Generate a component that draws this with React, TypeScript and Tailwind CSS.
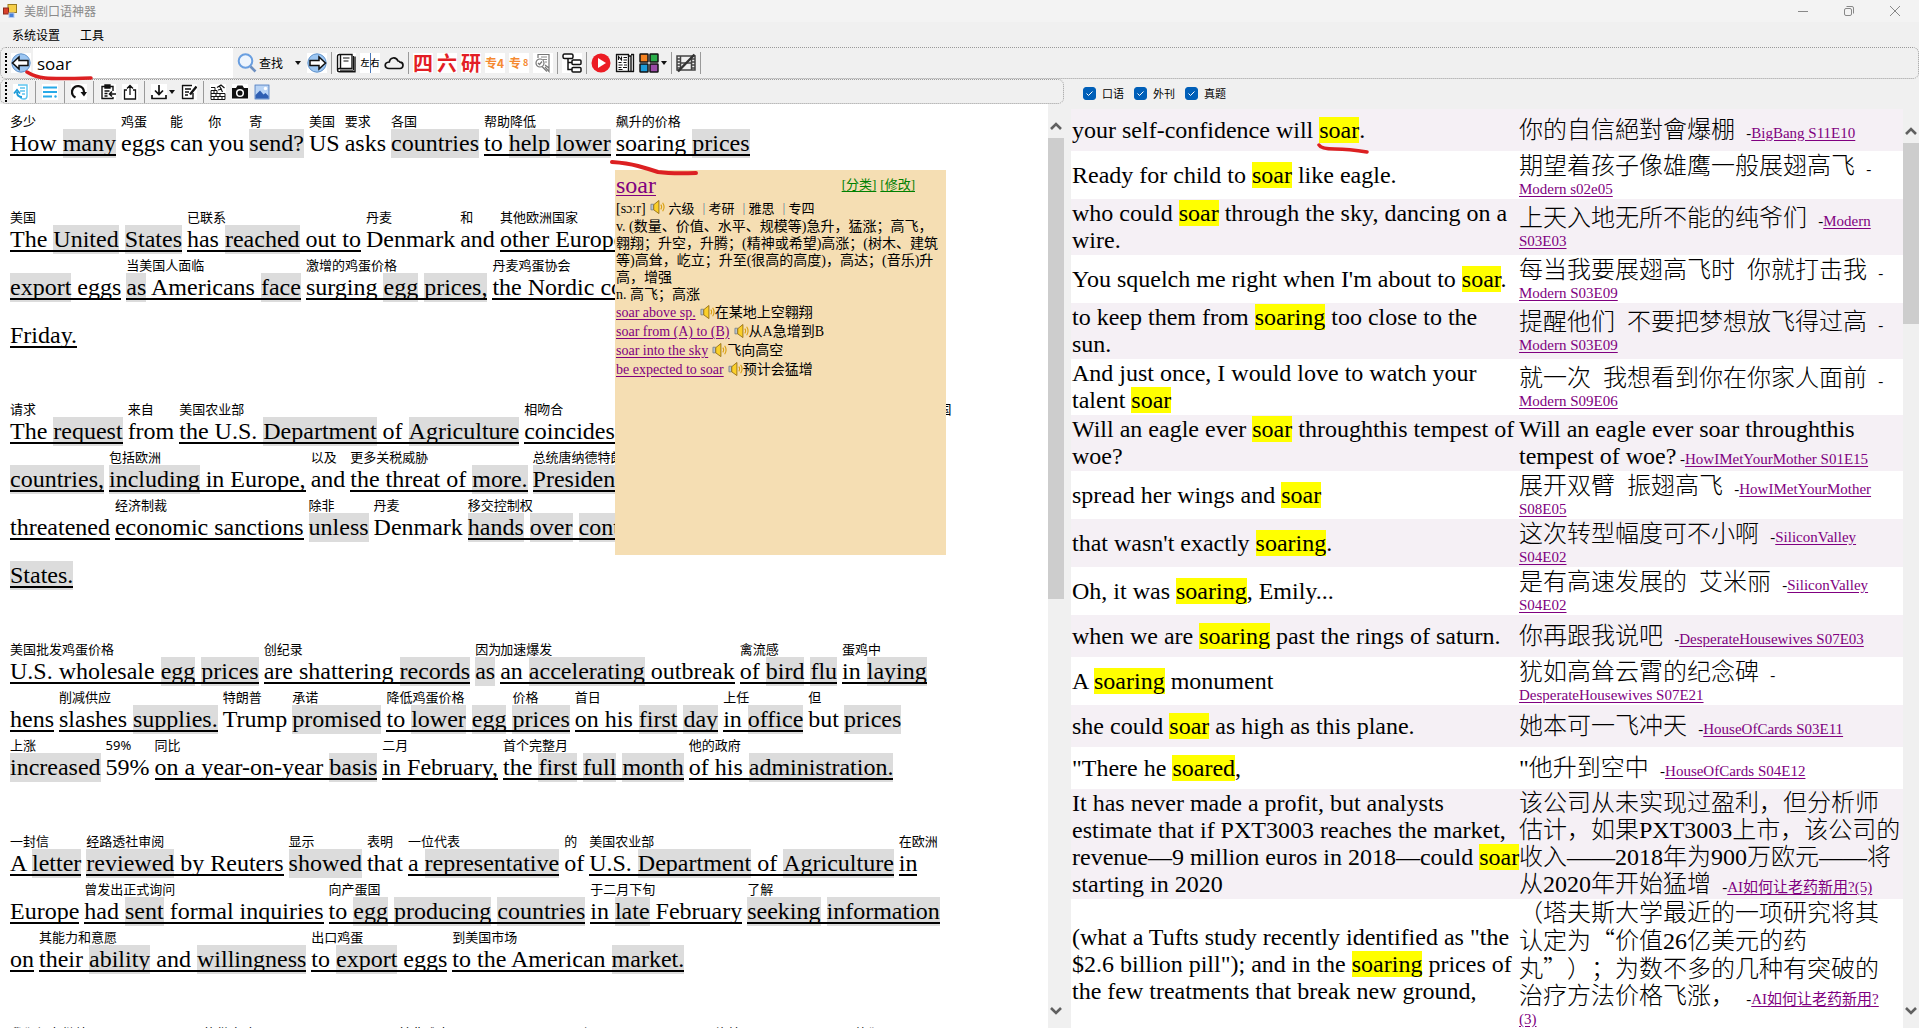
import { useState } from "react";
import type { ReactNode } from "react";

// 一个短语：t 中 *word* 表示灰底生词，r 是上方译文，u 为下划线
type Phrase = { t: string; r?: string; u?: boolean; join?: boolean };

const article: Phrase[][][] = [
  [
    [
      { t: "How *many*", r: "多少", u: true },
      { t: "eggs", r: "鸡蛋" },
      { t: "can", r: "能" },
      { t: "you", r: "你" },
      { t: "*send?*", r: "寄" },
      { t: "US", r: "美国" },
      { t: "asks", r: "要求" },
      { t: "*countries*", r: "各国" },
      { t: "to *help* *lower*", r: "帮助降低", u: true },
      { t: "soaring *prices*", r: "飙升的价格", u: true },
    ],
  ],
  [
    [
      { t: "The *United* *States*", r: "美国", u: true },
      { t: "has *reached* out to", r: "已联系", u: true },
      { t: "Denmark", r: "丹麦" },
      { t: "and", r: "和" },
      { t: "other European nations to", r: "其他欧洲国家", u: true },
    ],
    [
      { t: "*export* eggs", u: true },
      { t: "*as* Americans *face*", r: "当美国人面临", u: true },
      { t: "surging *egg* *prices,*", r: "激增的鸡蛋价格", u: true },
      { t: "the Nordic country's egg group said", r: "丹麦鸡蛋协会", u: true },
    ],
    [{ t: "Friday.", u: true }],
  ],
  [
    [
      { t: "The *request*", r: "请求", u: true },
      { t: "from", r: "来自" },
      { t: "the U.S. *Department* of *Agriculture*", r: "美国农业部", u: true },
      { t: "coincides with *tariffs* imposed on *various*", r: "相吻合", u: true },
      { t: "", r: "多国" },
    ],
    [
      { t: "*countries,*", u: true },
      { t: "*including* in Europe,", r: "包括欧洲", u: true },
      { t: "and", r: "以及" },
      { t: "the threat of *more.*", r: "更多关税威胁", u: true },
      { t: "*President* Donald Trump", r: "总统唐纳德特朗普", u: true },
    ],
    [
      { t: "threatened", u: true },
      { t: "economic sanctions", r: "经济制裁", u: true },
      { t: "*unless*", r: "除非" },
      { t: "Denmark", r: "丹麦" },
      { t: "*hands* *over* *control* to the United", r: "移交控制权", u: true },
    ],
    [{ t: "*States.*", u: true }],
  ],
  [
    [
      { t: "U.S. wholesale *egg* *prices*", r: "美国批发鸡蛋价格", u: true },
      { t: "are shattering *records*", r: "创纪录", u: true },
      { t: "*as*", r: "因为" },
      { t: "an *accelerating* outbreak", r: "加速爆发", u: true },
      { t: "of *bird* *flu*", r: "禽流感", u: true },
      { t: "in *laying*", r: "蛋鸡中", u: true },
    ],
    [
      { t: "hens", u: true },
      { t: "slashes *supplies.*", r: "削减供应", u: true },
      { t: "Trump", r: "特朗普" },
      { t: "*promised*", r: "承诺" },
      { t: "to *lower* *egg*", r: "降低鸡蛋价格", u: true, join: true },
      { t: "*prices*", r: "价格", u: true },
      { t: "on his *first* *day*", r: "首日", u: true },
      { t: "in *office*", r: "上任", u: true },
      { t: "but", r: "但" },
      { t: "*prices*" },
    ],
    [
      { t: "*increased*", r: "上涨" },
      { t: "59%", r: "59%" },
      { t: "on a year-on-year *basis*", r: "同比", u: true },
      { t: "in February,", r: "二月", u: true },
      { t: "the *first* *full* *month*", r: "首个完整月", u: true },
      { t: "of his *administration.*", r: "他的政府", u: true },
    ],
  ],
  [
    [
      { t: "A *letter*", r: "一封信", u: true },
      { t: "*reviewed* by Reuters", r: "经路透社审阅", u: true },
      { t: "*showed*", r: "显示" },
      { t: "that", r: "表明" },
      { t: "a *representative*", r: "一位代表", u: true },
      { t: "of", r: "的" },
      { t: "U.S. *Department* of *Agriculture*", r: "美国农业部", u: true },
      { t: "in", r: "在欧洲", u: true },
    ],
    [
      { t: "Europe", u: true },
      { t: "had *sent* formal inquiries", r: "曾发出正式询问", u: true },
      { t: "to *egg* *producing* *countries*", r: "向产蛋国", u: true },
      { t: "in *late* February", r: "于二月下旬", u: true },
      { t: "*seeking* *information*", r: "了解", u: true },
    ],
    [
      { t: "on", u: true },
      { t: "their *ability* and *willingness*", r: "其能力和意愿", u: true },
      { t: "to *export* eggs", r: "出口鸡蛋", u: true },
      { t: "to the American *market.*", r: "到美国市场", u: true },
    ],
  ],
  [
    [
      { t: "We are still *seeking*", r: "我们仍在继续", u: true },
      { t: "to learn whose *eggs*", r: "的供应鸡蛋", u: true },
      { t: "could *be* made or", r: "并非难事", u: true },
      { t: "*available* and", r: "以便可用", u: true },
      { t: "*shipped* over to", r: "运往美国", u: true },
      { t: "them", r: "他们" },
    ],
  ],
];

type Example = { en: string; zh: string; src: string; h: string };

const examples: Example[] = [
  { en: "your self-confidence will *soar*.", zh: "你的自信絕對會爆棚", src: "BigBang S11E10", h: "h-[42px]" },
  { en: "Ready for child to *soar* like eagle.", zh: "期望着孩子像雄鹰一般展翅高飞", src: "Modern s02e05", h: "h-12" },
  { en: "who could *soar* through the sky, dancing on a\nwire.", zh: "上天入地无所不能的纯爷们", src: "Modern S03E03", h: "h-14" },
  { en: "You squelch me right when I'm about to *soar*.", zh: "每当我要展翅高飞时  你就打击我", src: "Modern S03E09", h: "h-12" },
  { en: "to keep them from *soaring* too close to the\nsun.", zh: "提醒他们  不要把梦想放飞得过高", src: "Modern S03E09", h: "h-14" },
  { en: "And just once, I would love to watch your\ntalent *soar*", zh: "就一次  我想看到你在你家人面前", src: "Modern S09E06", h: "h-14" },
  { en: "Will an eagle ever *soar* throughthis tempest of\nwoe?", zh: "Will an eagle ever soar throughthis\ntempest of woe?", src: "HowIMetYourMother S01E15", h: "h-14" },
  { en: "spread her wings and *soar*", zh: "展开双臂  振翅高飞", src: "HowIMetYourMother S08E05", h: "h-12" },
  { en: "that wasn't exactly *soaring*.", zh: "这次转型幅度可不小啊", src: "SiliconValley S04E02", h: "h-12" },
  { en: "Oh, it was *soaring*, Emily...", zh: "是有高速发展的  艾米丽", src: "SiliconValley S04E02", h: "h-12" },
  { en: "when we are *soaring* past the rings of saturn.", zh: "你再跟我说吧", src: "DesperateHousewives S07E03", h: "h-[42px]" },
  { en: "A *soaring* monument", zh: "犹如高耸云霄的纪念碑", src: "DesperateHousewives S07E21", h: "h-12" },
  { en: "she could *soar* as high as this plane.", zh: "她本可一飞冲天", src: "HouseOfCards S03E11", h: "h-[42px]" },
  { en: '"There he *soared*,', zh: '"他升到空中', src: "HouseOfCards S04E12", h: "h-[42px]" },
  {
    en: "It has never made a profit, but analysts\nestimate that if PXT3003 reaches the market,\nrevenue—9 million euros in 2018—could *soar*\nstarting in 2020",
    zh: "该公司从未实现过盈利，但分析师\n估计，如果PXT3003上市，该公司的\n收入——2018年为900万欧元——将\n从2020年开始猛增",
    src: "AI如何让老药新用?(5)",
    h: "h-[109px]",
  },
  {
    en: '(what a Tufts study recently identified as "the\n$2.6 billion pill"); and in the *soaring* prices of\nthe few treatments that break new ground,',
    zh: "（塔夫斯大学最近的一项研究将其\n认定为“价值26亿美元的药\n丸”）；为数不多的几种有突破的\n治疗方法价格飞涨，",
    src: "AI如何让老药新用?\n(3)",
    h: "h-32",
  },
];

// 把 *word* 拆出来交给 render 包装
function mark(text: string, render: (w: string, i: number) => ReactNode) {
  return text.split(/\*([^*]+)\*/).map((part, i) => (i % 2 ? render(part, i) : part));
}

// 中文引号用中文字体，占满一个字宽
function quotes(text: string) {
  return text.split(/([“”])/).map((part, i) =>
    i % 2 ? <span key={i} className="font-['Noto_Sans_CJK_SC',sans-serif] leading-none">{part}</span> : part
  );
}

function Line({ phrases }: { phrases: Phrase[] }) {
  return (
    <div className="flex h-12 items-end whitespace-nowrap">
      {phrases.map((p, i) => (
        <span key={i} className={`flex flex-col ${p.join ? "" : "mr-[5px]"}`}>
          <span className="h-4 w-0 font-['Noto_Sans','Noto_Sans_CJK_SC',sans-serif] text-[13px] leading-4">{p.r}</span>
          <span className="h-[29px] leading-[29px]">
            <span className={`inline-block h-[27px] ${p.u ? "border-b-2 border-black" : ""} ${p.join ? "whitespace-pre" : ""}`}>
              {mark(p.t, (w, k) => (
                <span key={k} className="inline-block h-[29px] bg-[#dcdcdc]">
                  <span className={`inline-block h-[27px] ${p.u ? "border-b-2 border-black" : ""}`}>{w}</span>
                </span>
              ))}
              {p.join ? " " : ""}
            </span>
          </span>
        </span>
      ))}
    </div>
  );
}

function Speaker() {
  return (
    <svg viewBox="0 0 16 16" className="inline-block size-[15px] align-[-1px]">
      <path d="M1 4.500h3v6H1z" fill="#b9c4d0" stroke="#6b7785" strokeWidth="0.8" />
      <path d="M4 5l5.500-4.500v14L4 10.500z" fill="#fbd02a" stroke="#8f6a10" strokeWidth="0.9" />
      <path d="M11.500 5q1.800 2.500 0 5M13.500 3q3 4.500 0 9" fill="none" stroke="#d9a010" strokeWidth="1.2" />
    </svg>
  );
}

const meaning = [
  "v. (数量、价值、水平、规模等)急升，猛涨；高飞，",
  "翱翔；升空，升腾；(精神或希望)高涨；(树木、建筑",
  "等)高耸，屹立；升至(很高的高度)，高达；(音乐)升",
  "高，增强",
  "n. 高飞；高涨",
];

const usages = [
  ["soar above sp.", "在某地上空翱翔"],
  ["soar from (A) to (B)", "从A急增到B"],
  ["soar into the sky", "飞向高空"],
  ["be expected to soar", "预计会猛增"],
];

function WordPopup() {
  return (
    <section className="absolute left-[615px] top-[66px] h-[385px] w-[331px] bg-[#f5deb3] px-px text-sm leading-[17px] whitespace-nowrap">
      <svg viewBox="0 0 90 18" className="absolute left-[-5px] top-[-11px] h-[18px] w-[90px]">
        <path d="M2 3q15 1 26 4t20 6q14 2 38 1" fill="none" stroke="#dc2022" strokeWidth="4" strokeLinecap="round" />
      </svg>
      <div className="flex h-[29px] items-center justify-between pr-[30px]">
        <a href="#soar" className="text-2xl text-[#800080] underline decoration-1 underline-offset-2">soar</a>
        <span className="flex gap-1 text-[13px] text-[#008000]">
          <a href="#class" className="underline underline-offset-2">[分类]</a>
          <a href="#edit" className="underline underline-offset-2">[修改]</a>
        </span>
      </div>
      <div className="flex h-[19px] items-center">
        <span>[sɔːr]</span>
        <a href="#play" aria-label="发音" className="ml-1"><Speaker /></a>
        <span className="ml-1 flex text-[13px]">
          {["六级", "考研", "雅思", "专四"].map((t, i) => (
            <span key={t} className="flex items-center">
              {i > 0 && <span className="ml-2 mr-1 h-3 w-0.5 border-l border-[#e8b090] bg-[#9cc8c0]" />}
              {t}
            </span>
          ))}
        </span>
      </div>
      {meaning.map((m) => (
        <div key={m}>{m}</div>
      ))}
      {usages.map(([en, zh]) => (
        <div key={en} className="flex h-[19px] items-center">
          <a href="#usage" className="mr-1 text-[#800080] underline underline-offset-2">{en}</a>
          <Speaker />
          <span>{zh}</span>
        </div>
      ))}
    </section>
  );
}

function ScrollBar({ thumb }: { thumb: string }) {
  return (
    <div className="flex w-4 shrink-0 flex-col items-center bg-[#f0f0f0] pt-[18px]">
      <svg viewBox="0 0 12 8" className="mb-2 h-2 w-3 shrink-0">
        <path d="M1 7l5-5 5 5" fill="none" stroke="#606060" strokeWidth="2.6" />
      </svg>
      <div className="flex w-full flex-1 flex-col">
        <div className={`w-full bg-[#cdcdcd] ${thumb}`} />
      </div>
      <svg viewBox="0 0 12 8" className="mb-[13px] h-2 w-3 shrink-0">
        <path d="M1 1l5 5 5-5" fill="none" stroke="#606060" strokeWidth="2.6" />
      </svg>
    </div>
  );
}

function Icon({ label, box = "0 0 20 20", size = "size-5", white = true, children }: { label: string; box?: string; size?: string; white?: boolean; children: ReactNode }) {
  return (
    <button type="button" aria-label={label} className={`shrink-0 ${white ? "bg-white" : ""}`}>
      <svg viewBox={box} className={size} fill="none" stroke="#111" strokeWidth="1.5">
        {children}
      </svg>
    </button>
  );
}

function Sep() {
  return <span className="h-[22px] w-px shrink-0 bg-[#9a9a9a]" />;
}

function Caret() {
  return (
    <svg viewBox="0 0 6 4" className="h-1 w-1.5 shrink-0">
      <path d="M0 0h6L3 4z" fill="#111" />
    </svg>
  );
}

function Grip() {
  return <span className="h-5 w-0 shrink-0 border-l-2 border-dotted border-black" />;
}

function MainToolbar({ word, onWord }: { word: string; onWord: (w: string) => void }) {
  return (
    <div className="relative flex h-8 items-center gap-1 rounded-md border border-dotted border-[#9a9a9a] pl-1">
      <Grip />
      <Icon label="后退">
        <circle cx="10" cy="10" r="9.2" fill="#9cc6f2" stroke="#5c8fc8" strokeWidth="1" />
        <path d="M1.500 10L8 4v3.500h9v5H8V16z" fill="#fff" stroke="#111" />
      </Icon>
      <input
        aria-label="单词"
        value={word}
        onChange={(e) => onWord(e.target.value)}
        className="-ml-0.5 h-[30px] w-[200px] bg-white px-1 font-['Open_Sans',sans-serif] text-[17px] text-black outline-none"
      />
      <button type="button" className="flex items-center gap-0.5 font-['Noto_Sans_CJK_SC',sans-serif] text-xs">
        <svg viewBox="0 0 20 20" className="size-5" fill="none">
          <circle cx="8.500" cy="8" r="6.800" stroke="#6a9fe0" strokeWidth="2" fill="#eef5fd" />
          <path d="M13.500 13.500l5 5" stroke="#6d8fc0" strokeWidth="2.600" />
        </svg>
        查找
      </button>
      <span className="ml-2 mr-0.5 flex"><Caret /></span>
      <Icon label="前进">
        <circle cx="10" cy="10" r="9.2" fill="#9cc6f2" stroke="#5c8fc8" strokeWidth="1" />
        <path d="M18.500 10L12 4v3.500H3v5h9V16z" fill="#fff" stroke="#111" />
      </Icon>
      <Sep />
      <Icon label="词典">
        <path d="M3.500 15.500h12.500V1.500H3.500Q1.500 1.500 1.500 3.500V17Q1.500 18.800 3.500 18.800H19V3.500M3.500 15.500Q1.500 15.500 1.500 17M4.500 1.500v14" strokeWidth="1.400" />
        <path d="M7 5h6.500M7.500 8h5M4 17.200h13.500V3" strokeWidth="1" />
      </Icon>
      <button type="button" className="flex w-5 shrink-0 justify-center bg-white text-[9px] leading-5 font-medium">
        <span>左</span>
        <span className="w-px bg-[#4a78b8]" />
        <span>右</span>
      </button>
      <Icon label="云" white={false}>
        <path d="M5 15.500h10.500a3.200 3.200 0 0 0 .5-6.400Q15.500 8 14 8Q12.500 4.500 9 5Q5.800 5.500 5.300 9Q1.200 9.300 1.200 12.500Q1.500 15.500 5 15.500z" strokeWidth="1.700" />
      </Icon>
      <Sep />
      {["四", "六", "研"].map((t) => (
        <button key={t} type="button" className="w-5 shrink-0 bg-white text-xl leading-5 font-bold text-[#e31e25]">{t}</button>
      ))}
      <button type="button" className="flex w-5 shrink-0 items-center bg-white text-xs leading-5 font-bold text-[#f58a32]">专<span>4</span></button>
      <button type="button" className="flex w-5 shrink-0 items-center bg-white text-xs leading-5 font-bold text-[#f58a32]">专<span className="ml-0.5 text-[9px]">8</span></button>
      <Icon label="真题">
        <path d="M5 5V1.500h11V15l-4-3M16 15v3.500L12 14" stroke="#777" strokeWidth="1.200" />
        <path d="M8 4h6M10 6.500h4M12 9h2" stroke="#888" strokeWidth="1" />
        <circle cx="7" cy="10" r="4" stroke="#777" strokeWidth="1.200" />
        <path d="M5 10l1.500 1.500L9 8.500M9 13.500l5 5" stroke="#777" strokeWidth="1.200" />
      </Icon>
      <Sep />
      <Icon label="词根">
        <rect x="1" y="1" width="10" height="4.500" rx="1.500" />
        <rect x="10" y="7" width="9" height="4.500" rx="1" />
        <rect x="10" y="14.500" width="9" height="4.500" rx="1" />
        <path d="M6 5.500V16.500h4M6 9.500h4" />
      </Icon>
      <Sep />
      <Icon label="播放" white={false}>
        <circle cx="10" cy="10" r="9.500" fill="#ec1c24" stroke="none" />
        <path d="M7 5l8 5-8 5z" fill="#fff" stroke="none" />
      </Icon>
      <Icon label="外刊">
        <path d="M1.500 1.500h12v17h-12zM13.500 3h2.500v15.500h-2.500M16 1.500h2.500v17H16" strokeWidth="1.400" />
        <path d="M3.500 7V3.500l3 3.500V3.500M8.500 4.500h3.500M8.500 7h3.500M3.500 9.500h3M8.500 9.500h3M3.500 12h4M9 12h3M3.500 14.500h3M8 14.500h4M3.500 16.500h4" strokeWidth="1.100" />
      </Icon>
      <Icon label="颜色">
        <rect x="1" y="1" width="8" height="8" rx="0.500" fill="#f58220" />
        <rect x="11" y="1" width="8" height="8" rx="0.500" fill="#2bae4a" />
        <rect x="1" y="11" width="8" height="8" rx="0.500" fill="#1c9ad6" />
        <rect x="11" y="11" width="8" height="8" rx="0.500" fill="#9a4ba6" />
      </Icon>
      <span className="-ml-0.5 flex"><Caret /></span>
      <Sep />
      <Icon label="视频" white={false}>
        <path d="M1 3h18v14H1zM4.500 3v14M15.500 3v14M4.500 10h11" stroke="#444" />
        <path d="M1 6h3M1 9h3M1 12h3M1 15h3M16 6h3M16 9h3M16 12h3M16 15h3" stroke="#444" />
        <path d="M2 18.500L18.500 1.500" stroke="#333" strokeWidth="2.500" />
      </Icon>
      <Sep />
      <svg viewBox="0 0 68 12" className="absolute left-6 top-[22px] h-3 w-[68px]">
        <path d="M2 2q8 5 18 6t46 0" fill="none" stroke="#dc2022" strokeWidth="3.500" strokeLinecap="round" />
      </svg>
    </div>
  );
}

function SubToolbar() {
  return (
    <div className="flex h-[25px] items-center gap-1.5 rounded-md border border-dotted border-[#9a9a9a] pl-1">
      <Grip />
      <Icon label="返回" box="0 0 16 16" size="size-4">
        <path d="M5 1h9v11q0 3-3 3-4 0-4-3M7 4h5M7 7h5M9 10h3" stroke="#5cc4ee" strokeWidth="1.400" />
        <path d="M9 13Q4 13 4 8M1 9.500L4 6l3 3.500" stroke="#1b9ad8" strokeWidth="1.800" />
      </Icon>
      <Sep />
      <Icon label="段落" box="0 0 16 16" size="size-4">
        <path d="M1 3.500h14M1 8h14M1 12.500h9" stroke="#27a9e8" strokeWidth="1.800" />
        <circle cx="13.500" cy="12.500" r="1.200" fill="#27a9e8" stroke="none" />
      </Icon>
      <Sep />
      <Icon label="刷新" box="0 0 16 16" size="size-4">
        <path d="M4.500 13.500A6 6 0 1 1 13 8" strokeWidth="2.300" />
        <path d="M9.500 8h6.500l-3 4.500z" fill="#111" stroke="none" />
      </Icon>
      <Sep />
      <Icon label="粘贴" box="0 0 16 16" size="size-4">
        <path d="M13 7V2.500H2v12h11V13M5 2.500V1h5v3H5zM4.500 7h5M4.500 9.500h3M4.500 12h3" strokeWidth="1.400" />
        <path d="M16 10H9.500M12 7.500L9.500 10l2.500 2.500" strokeWidth="1.600" />
      </Icon>
      <Icon label="分享" box="0 0 16 16" size="size-4">
        <path d="M5 6H2.500v9h11V6H11M8 11V1.500M5 4.500l3-3 3 3" strokeWidth="1.300" />
      </Icon>
      <Sep />
      <Icon label="下载" box="0 0 16 16" size="size-4">
        <path d="M8 1v9M4 6.500l4 4 4-4M1 11v3.500h14V11" strokeWidth="1.700" />
      </Icon>
      <span className="-ml-1 flex"><Caret /></span>
      <Icon label="编辑" box="0 0 16 16" size="size-4">
        <path d="M12 9v5.500H1.500v-13H11M4 5h6M4 8h4M4 11h3" strokeWidth="1.400" />
        <path d="M15.500 2.500L9 10.500" strokeWidth="2.400" />
      </Icon>
      <Sep />
      <Icon label="积累" box="0 0 16 16" size="size-4">
        <path d="M1 6.500h6v3h8v6H1zM1 9.500h6M1 12.500h14M4 6.500v3M6 9.500v3M4 12.500v3M10 9.500v3M8 12.500v3M12 12.500v3M1 3.500h4v3" strokeWidth="1" />
        <path d="M7 3.500l4-2.500 3.500 3M9.500 2l3 6M8 6l4-1" strokeWidth="1.200" />
      </Icon>
      <Icon label="截图" box="0 0 16 16" size="size-4">
        <path d="M0 4h4l1.500-2.500h5L12 4h4v10.500H0z" fill="#111" stroke="none" />
        <circle cx="8" cy="9" r="3.300" fill="#111" stroke="#fff" strokeWidth="1.500" />
      </Icon>
      <Icon label="图片" box="0 0 16 16" size="size-4">
        <rect x="1" y="1" width="14" height="14" fill="#b9d4f6" stroke="#5c84c0" strokeWidth="1" />
        <path d="M1.500 14.500V11L6 6.500l3.500 4 2-1.500 3 3v2.500z" fill="#2f5fb3" stroke="none" />
        <circle cx="11.500" cy="4.500" r="1.700" fill="#fff" stroke="none" />
      </Icon>
    </div>
  );
}

function Check({ label }: { label: string }) {
  return (
    <label className="flex items-center gap-1.5 text-[11px]">
      <span className="relative flex">
        <input type="checkbox" defaultChecked className="peer size-[13px] appearance-none rounded-[3px] border border-[#005fb8] checked:bg-[#005fb8]" />
        <svg viewBox="0 0 13 13" className="pointer-events-none absolute inset-0 hidden size-[13px] peer-checked:block">
          <path d="M3.500 6.500l2 2 4-4" fill="none" stroke="#fff" strokeWidth="1" />
        </svg>
      </span>
      {label}
    </label>
  );
}

function ExampleTable() {
  return (
    <table className="w-full table-fixed border-collapse text-black">
      <colgroup>
        <col className="w-[447px]" />
        <col />
      </colgroup>
      <tbody>
        {examples.map((ex, i) => (
          <tr key={i} className={`${ex.h} ${i % 2 ? "bg-white" : "bg-[#f5f0f5]"}`}>
            <td className="p-px align-middle text-2xl leading-[27px] whitespace-pre">
              {mark(ex.en, (w, k) => (
                <mark key={k} className="relative bg-[#ffff00] text-black">
                  {w}
                  {i === 0 && (
                    <svg viewBox="0 0 54 12" className="absolute left-[-2px] top-[26px] h-3 w-[54px]">
                      <path d="M2 2q2 4 16 4t32 3" fill="none" stroke="#dc2022" strokeWidth="3.500" strokeLinecap="round" />
                    </svg>
                  )}
                </mark>
              ))}
            </td>
            <td className="p-px align-middle text-[15px] leading-[18px]">
              <span className="text-2xl leading-[27px] font-light whitespace-pre-wrap">{quotes(ex.zh)}</span>
              {i === 6 ? " -" : <>&nbsp; &nbsp;-</>}
              <wbr />
              <a href="#source" className="whitespace-pre-line text-[#800080] underline underline-offset-2">{ex.src}</a>
            </td>
          </tr>
        ))}
      </tbody>
    </table>
  );
}

export default function App() {
  const [word, setWord] = useState("soar");

  return (
    <div className="flex h-screen flex-col overflow-hidden bg-[#f0f0f0] font-['Noto_Sans_CJK_SC',sans-serif] text-black [text-spacing-trim:space-all]">
      <header className="flex h-[22px] shrink-0 items-center bg-[#f3f3f3] pl-[3px] text-xs text-[#8a8a8a]">
        <svg viewBox="0 0 14 14" className="mr-[7px] size-3.5">
          <rect x="5" y="0.500" width="8.500" height="8" fill="#f6cf4a" stroke="#9a7a20" />
          <rect x="0.500" y="4" width="5" height="6" fill="#d8402c" stroke="#8c2a1c" />
          <rect x="6" y="9" width="5" height="4.500" fill="#4a80d8" stroke="#b9cdf0" />
        </svg>
        <h1 className="flex-1">美剧口语神器</h1>
        <div className="flex items-center gap-9 pr-[19px]">
          <button type="button" aria-label="最小化">
            <svg viewBox="0 0 10 10" className="size-2.5"><path d="M0 5.500h10" stroke="#888" /></svg>
          </button>
          <button type="button" aria-label="还原">
            <svg viewBox="0 0 10 10" className="size-2.5" fill="none" stroke="#888">
              <rect x="0.500" y="2.500" width="7" height="7" rx="1.500" />
              <path d="M2.500 .5H8Q9.500 .5 9.500 2v5.500" />
            </svg>
          </button>
          <button type="button" aria-label="关闭">
            <svg viewBox="0 0 10 10" className="size-2.5" stroke="#888"><path d="M0 0l10 10M10 0L0 10" /></svg>
          </button>
        </div>
      </header>

      <nav className="flex h-[25px] shrink-0 items-center gap-5 pl-3 text-xs">
        <button type="button">系统设置</button>
        <button type="button">工具</button>
      </nav>

      <MainToolbar word={word} onWord={setWord} />

      <div className="grid min-h-0 flex-1 grid-cols-[1064fr_855fr]">
        <div className="flex min-h-0 min-w-0 flex-col">
          <SubToolbar />
          <div className="flex min-h-0 flex-1">
            <main className="relative min-w-0 flex-1 overflow-hidden bg-white pl-2.5 font-['Liberation_Serif','Noto_Sans_CJK_SC',serif] text-2xl">
              <div className="flex flex-col gap-12 pt-[6px]">
                {article.map((para, i) => (
                  <div key={i}>
                    {para.map((line, k) => (
                      <Line key={k} phrases={line} />
                    ))}
                  </div>
                ))}
              </div>
              <WordPopup />
            </main>
            <ScrollBar thumb="h-[53%]" />
          </div>
        </div>

        <div className="flex min-h-0 min-w-0 flex-col">
          <div className="flex h-[30px] shrink-0 items-center gap-2.5 pl-[19px] pb-0.5">
            <Check label="口语" />
            <Check label="外刊" />
            <Check label="真题" />
          </div>
          <div className="flex min-h-0 flex-1 pl-[7px]">
            <div className="min-w-0 flex-1 overflow-hidden bg-white font-['Liberation_Serif','Noto_Sans_CJK_SC',serif]">
              <ExampleTable />
            </div>
            <ScrollBar thumb="h-[21%]" />
          </div>
        </div>
      </div>
    </div>
  );
}
